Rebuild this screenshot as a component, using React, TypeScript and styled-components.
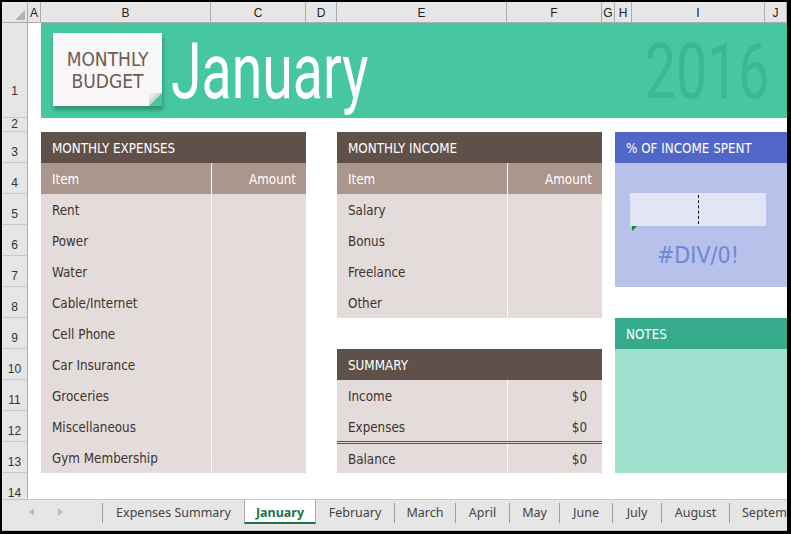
import React from 'react';
import styled, { createGlobalStyle } from 'styled-components';

const SHEET_FONT = `"DejaVu Sans Condensed", "DejaVu Sans", "Noto Sans", sans-serif`;
const UI_FONT = `"Noto Sans", "Open Sans", sans-serif`;
const TITLE_FONT = `Roboto, "Noto Sans", sans-serif`;

const GlobalStyle = createGlobalStyle`
  html, body { margin: 0; padding: 0; background: #000; }
  body { width: 791px; height: 534px; overflow: hidden; }
  *, *::before, *::after { box-sizing: border-box; }
`;

const Window = styled.div`
  width: 791px;
  height: 534px;
  padding: 2px 4px 3px 2px;
  background: #000;
  display: flex;
  flex-direction: column;
`;

const Sheet = styled.div`
  flex: none;
  height: 497px;
  background: #fff;
  display: grid;
  grid-template-columns: 26px 13px 170px 95px 31px 170px 95px 13px 17px 133px 22px;
  grid-template-rows: 21px 95px 14px repeat(11, 31px) 31px;
  overflow: hidden;
`;

const Corner = styled.div`
  grid-row: 1;
  grid-column: 1;
  background: #e6e6e6;
  border-right: 1px solid #ababab;
  border-bottom: 1px solid #ababab;
  display: flex;
  align-items: flex-end;
  justify-content: flex-end;
  padding: 0 2px 2px 0;
`;

const CornerTriangle = styled.div`
  width: 0;
  height: 0;
  border-left: 10px solid transparent;
  border-bottom: 10px solid #b4b4b4;
`;

const ColHead = styled.div`
  grid-row: 1;
  background: #e6e6e6;
  border-right: 1px solid #ababab;
  border-bottom: 1px solid #ababab;
  display: flex;
  align-items: center;
  justify-content: center;
  font: 12px "Liberation Sans", Arial, sans-serif;
  color: #222;
  padding-top: 1px;
`;

const RowHead = styled.div<{ $pad?: number }>`
  grid-column: 1;
  background: #e6e6e6;
  border-right: 1px solid #ababab;
  border-bottom: 1px solid #c8c8c8;
  display: flex;
  align-items: flex-end;
  justify-content: center;
  padding-bottom: ${(p) => p.$pad ?? 3}px;
  font: 12px "Liberation Sans", Arial, sans-serif;
  line-height: 14px;
  color: #333;
`;

const Banner = styled.div`
  grid-column: 3 / 12;
  grid-row: 2;
  background: #46c7a1;
  display: flex;
  align-items: flex-start;
  padding: 10px 18px 0 12px;
  overflow: hidden;
`;

const Card = styled.div`
  flex: none;
  position: relative;
  width: 109px;
  height: 73px;
  background: #f8f6f6;
  box-shadow: 1px 4px 4px rgba(20, 80, 60, 0.45);
  display: flex;
  flex-direction: column;
  align-items: center;
  justify-content: center;
  font: 19px ${SHEET_FONT};
  line-height: 22px;
  color: #6c5b55;
  padding-top: 1px;
  &::after {
    content: '';
    position: absolute;
    right: 0;
    bottom: 0;
    width: 13px;
    height: 13px;
    background: linear-gradient(135deg, #f4f4f4 0%, #d2d2d2 48%, #46c7a1 52%);
  }
`;

const Title = styled.div`
  flex: none;
  margin-left: 9px;
  font-family: ${TITLE_FONT};
  font-weight: 400;
  font-size: 78px;
  line-height: 78px;
  color: #fff;
  transform: scaleX(0.71);
  transform-origin: left top;
`;

const Year = styled(Title)`
  margin-left: auto;
  color: #3bb892;
  transform-origin: right top;
`;

const Panel = styled.div<{ $col: string; $row: string }>`
  grid-column: ${(p) => p.$col};
  grid-row: ${(p) => p.$row};
  display: flex;
  flex-direction: column;
  font-family: ${SHEET_FONT};
`;

const PanelHeader = styled.div<{ $bg: string }>`
  flex: none;
  height: 31px;
  background: ${(p) => p.$bg};
  color: #fff;
  font-size: 13.3px;
  display: flex;
  align-items: center;
  padding: 1px 0 0 11px;
`;

const Row = styled.div<{ $sub?: boolean; $total?: boolean }>`
  flex: none;
  display: grid;
  grid-template-columns: 170px 1fr;
  height: ${(p) => (p.$total ? 32 : 31)}px;
  margin-top: ${(p) => (p.$total ? -1 : 0)}px;
  border-top: ${(p) => (p.$total ? '3px double #5f5049' : 'none')};
  background: ${(p) => (p.$sub ? '#ab968d' : '#e4dcda')};
  color: ${(p) => (p.$sub ? '#fff' : '#40332f')};
  font-size: 13.3px;
`;

const Cell = styled.div<{ $amount?: boolean; $padR?: number }>`
  display: flex;
  align-items: center;
  justify-content: ${(p) => (p.$amount ? 'flex-end' : 'flex-start')};
  padding: ${(p) => (p.$amount ? `1px ${p.$padR ?? 10}px 0 0` : '1px 0 0 11px')};
  border-left: ${(p) => (p.$amount ? '1px solid #fff' : 'none')};
  white-space: nowrap;
`;

const PercentBody = styled.div`
  flex: 1;
  background: #b7c1ea;
  display: flex;
  flex-direction: column;
  align-items: center;
  padding: 30px 21px 0 15px;
`;

const Gauge = styled.div`
  position: relative;
  width: 100%;
  height: 33px;
  background: #e1e5f6;
  &::after {
    content: '';
    position: absolute;
    left: 68px;
    top: 2px;
    bottom: 2px;
    border-left: 1px dashed #111;
  }
`;

const ErrorFlag = styled.div`
  position: absolute;
  left: 2px;
  top: 100%;
  width: 0;
  height: 0;
  border-top: 5px solid #0d8a1e;
  border-right: 5px solid transparent;
`;

const ErrorValue = styled.div`
  margin-top: 14px;
  font-size: 23px;
  color: #6f87d8;
  line-height: 30px;
`;

const NotesBody = styled.div`
  flex: 1;
  background: #a0e0cf;
`;

const TabBar = styled.div`
  flex: 1;
  background: #e6e6e6;
  border-top: 1px solid #c6c6c6;
  border-bottom: 1px solid #c6c6c6;
  display: flex;
  align-items: flex-start;
  overflow: hidden;
  font-family: ${UI_FONT};
  font-size: 12.5px;
`;

const Nav = styled.div`
  flex: none;
  width: 100px;
  height: 24px;
  display: flex;
  align-items: center;
  gap: 24px;
  padding-left: 27px;
`;

const Sep = styled.div`
  flex: none;
  width: 1px;
  height: 20px;
  margin-top: 3px;
  background: #9e9e9e;
`;

const Tab = styled.div<{ $w: number; $active?: boolean; $clip?: boolean }>`
  flex: none;
  width: ${(p) => p.$w}px;
  height: 24px;
  display: flex;
  align-items: center;
  justify-content: ${(p) => (p.$clip ? 'flex-start' : 'center')};
  padding-left: ${(p) => (p.$clip ? 12 : 0)}px;
  white-space: nowrap;
  color: ${(p) => (p.$active ? '#217346' : '#444')};
  font-weight: ${(p) => (p.$active ? 700 : 400)};
  background: ${(p) => (p.$active ? '#fff' : 'transparent')};
  border-left: ${(p) => (p.$active ? '1px solid #ababab' : 'none')};
  border-right: ${(p) => (p.$active ? '1px solid #ababab' : 'none')};
  border-bottom: ${(p) => (p.$active ? '2px solid #217346' : 'none')};
  padding-top: ${(p) => (p.$active ? 2 : 0)}px;
  overflow: hidden;
`;

const Arrow = ({ dir }: { dir: 'left' | 'right' }) => (
  <svg width="5" height="8" viewBox="0 0 5 8">
    <polygon
      points={dir === 'left' ? '5,0 5,8 0,4' : '0,0 0,8 5,4'}
      fill="#bdbdbd"
    />
  </svg>
);

const columns = ['A', 'B', 'C', 'D', 'E', 'F', 'G', 'H', 'I', 'J'];
const rowPads: Record<number, number> = { 1: 19, 2: 0, 14: 3 };

const expenses = [
  'Rent',
  'Power',
  'Water',
  'Cable/Internet',
  'Cell Phone',
  'Car Insurance',
  'Groceries',
  'Miscellaneous',
  'Gym Membership',
];
const income = ['Salary', 'Bonus', 'Freelance', 'Other'];

const tabs: { label: string; w: number; active?: boolean; clip?: boolean }[] = [
  { label: 'Expenses Summary', w: 141 },
  { label: 'January', w: 72, active: true },
  { label: 'February', w: 78 },
  { label: 'March', w: 60 },
  { label: 'April', w: 53 },
  { label: 'May', w: 49 },
  { label: 'June', w: 52 },
  { label: 'July', w: 48 },
  { label: 'August', w: 67 },
  { label: 'September', w: 90, clip: true },
];

export default function App() {
  return (
    <>
      <GlobalStyle />
      <Window>
        <Sheet>
          <Corner>
            <CornerTriangle />
          </Corner>
          {columns.map((c) => (
            <ColHead key={c}>{c}</ColHead>
          ))}
          {Array.from({ length: 14 }, (_, i) => (
            <RowHead key={i} $pad={rowPads[i + 1]}>
              {i + 1}
            </RowHead>
          ))}

          <Banner>
            <Card>
              <span>MONTHLY</span>
              <span>BUDGET</span>
            </Card>
            <Title>January</Title>
            <Year>2016</Year>
          </Banner>

          <Panel $col="3 / 5" $row="4 / 15">
            <PanelHeader $bg="#5f5049">MONTHLY EXPENSES</PanelHeader>
            <Row $sub>
              <Cell>Item</Cell>
              <Cell $amount>Amount</Cell>
            </Row>
            {expenses.map((e) => (
              <Row key={e}>
                <Cell>{e}</Cell>
                <Cell $amount />
              </Row>
            ))}
          </Panel>

          <Panel $col="6 / 8" $row="4 / 10">
            <PanelHeader $bg="#5f5049">MONTHLY INCOME</PanelHeader>
            <Row $sub>
              <Cell>Item</Cell>
              <Cell $amount>Amount</Cell>
            </Row>
            {income.map((e) => (
              <Row key={e}>
                <Cell>{e}</Cell>
                <Cell $amount />
              </Row>
            ))}
          </Panel>

          <Panel $col="6 / 8" $row="11 / 15">
            <PanelHeader $bg="#5f5049">SUMMARY</PanelHeader>
            <Row>
              <Cell>Income</Cell>
              <Cell $amount $padR={15}>$0</Cell>
            </Row>
            <Row>
              <Cell>Expenses</Cell>
              <Cell $amount $padR={15}>$0</Cell>
            </Row>
            <Row $total>
              <Cell>Balance</Cell>
              <Cell $amount $padR={15}>$0</Cell>
            </Row>
          </Panel>

          <Panel $col="9 / 12" $row="4 / 9">
            <PanelHeader $bg="#5067c8">% OF INCOME SPENT</PanelHeader>
            <PercentBody>
              <Gauge>
                <ErrorFlag />
              </Gauge>
              <ErrorValue>#DIV/0!</ErrorValue>
            </PercentBody>
          </Panel>

          <Panel $col="9 / 12" $row="10 / 15">
            <PanelHeader $bg="#35ab8b">NOTES</PanelHeader>
            <NotesBody />
          </Panel>
        </Sheet>

        <TabBar>
          <Nav>
            <Arrow dir="left" />
            <Arrow dir="right" />
          </Nav>
          <Sep />
          {tabs.map((t, i) => {
            const prev = tabs[i - 1];
            const needSep = i > 0 && !t.active && !(prev && prev.active);
            return (
              <React.Fragment key={t.label}>
                {needSep && <Sep />}
                <Tab $w={t.w} $active={t.active} $clip={t.clip}>
                  {t.label}
                </Tab>
              </React.Fragment>
            );
          })}
        </TabBar>
      </Window>
    </>
  );
}
